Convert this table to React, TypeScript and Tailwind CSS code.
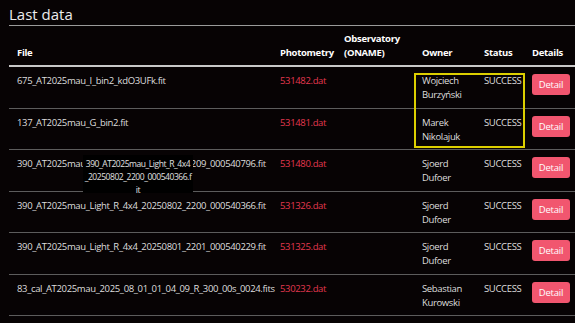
import React from 'react';

interface Row {
  file: string;
  dat: string;
  owner: [string, string];
  status: string;
}

const rows: Row[] = [
  { file: '675_AT2025mau_I_bin2_kdO3UFk.fit', dat: '531482.dat', owner: ['Wojciech', 'Burzyński'], status: 'SUCCESS' },
  { file: '137_AT2025mau_G_bin2.fit', dat: '531481.dat', owner: ['Marek', 'Nikolajuk'], status: 'SUCCESS' },
  { file: '390_AT2025mau_Light_R_4x4_20250801_2209_000540796.fit', dat: '531480.dat', owner: ['Sjoerd', 'Dufoer'], status: 'SUCCESS' },
  { file: '390_AT2025mau_Light_R_4x4_20250802_2200_000540366.fit', dat: '531326.dat', owner: ['Sjoerd', 'Dufoer'], status: 'SUCCESS' },
  { file: '390_AT2025mau_Light_R_4x4_20250801_2201_000540229.fit', dat: '531325.dat', owner: ['Sjoerd', 'Dufoer'], status: 'SUCCESS' },
  { file: '83_cal_AT2025mau_2025_08_01_01_04_09_R_300_00s_0024.fits', dat: '530232.dat', owner: ['Sebastian', 'Kurowski'], status: 'SUCCESS' },
];

const cols = 'grid grid-cols-[263px_64px_78px_62px_48px_70px]';

export default function App() {
  return (
    <div
      className="relative w-[575px] h-[323px] overflow-hidden bg-[#070304] text-[#dedede] text-[9.5px] tracking-[-0.35px] leading-[14px]"
      style={{ fontFamily: '"Open Sans", "Noto Sans", sans-serif' }}
    >
      <div className="ml-[9px] pt-[4px] border-b border-[#9a9a9a]">
        <h2 className="text-[15px] tracking-normal leading-[21px] text-[#ececec]">Last data</h2>
      </div>

      <div className="ml-[9px] w-[585px]">
        {/* header */}
        <div className={`${cols} border-b-2 border-[#c8c8c8] font-bold text-white text-[9.5px] tracking-[-0.3px] items-end pt-[6px] pb-[5px]`}>
          <div className="px-[8px]">File</div>
          <div className="px-[8px]">Photometry</div>
          <div className="px-[8px]">
            Observatory
            <br />
            (ONAME)
          </div>
          <div className="px-[8px]">Owner</div>
          <div className="px-[8px]">Status</div>
          <div className="px-[8px]">Details</div>
        </div>

        {rows.map((r) => (
          <div key={r.dat} className={`${cols} h-[41.5px] border-b border-[#5c5c5c] pt-[7px]`}>
            <div className="px-[8px] whitespace-nowrap">{r.file}</div>
            <div className="px-[8px] text-[#e3384f]">{r.dat}</div>
            <div className="px-[8px]"></div>
            <div className="px-[8px]">
              {r.owner[0]}
              <br />
              {r.owner[1]}
            </div>
            <div className="px-[8px] whitespace-nowrap">{r.status}</div>
            <div className="px-[8px]">
              <button className="h-[21px] w-[38px] rounded-[3px] bg-[#f1566f] text-white text-[9.5px] tracking-[-0.2px] leading-[21px]">
                Detail
              </button>
            </div>
          </div>
        ))}
      </div>

      {/* highlight box */}
      <div className="absolute left-[414px] top-[73px] w-[111px] h-[75px] border-2 border-[#dccf00]" />

      {/* tooltip */}
      <div className="absolute left-[83px] top-[155px] w-[110px] h-[38px] bg-black text-center text-[8.5px] tracking-[-0.45px] leading-[13px] pt-[2px] text-[#e0e0e0] whitespace-nowrap">
        390_AT2025mau_Light_R_4x4
        <br />
        _20250802_2200_000540366.f
        <br />
        it
      </div>
    </div>
  );
}
